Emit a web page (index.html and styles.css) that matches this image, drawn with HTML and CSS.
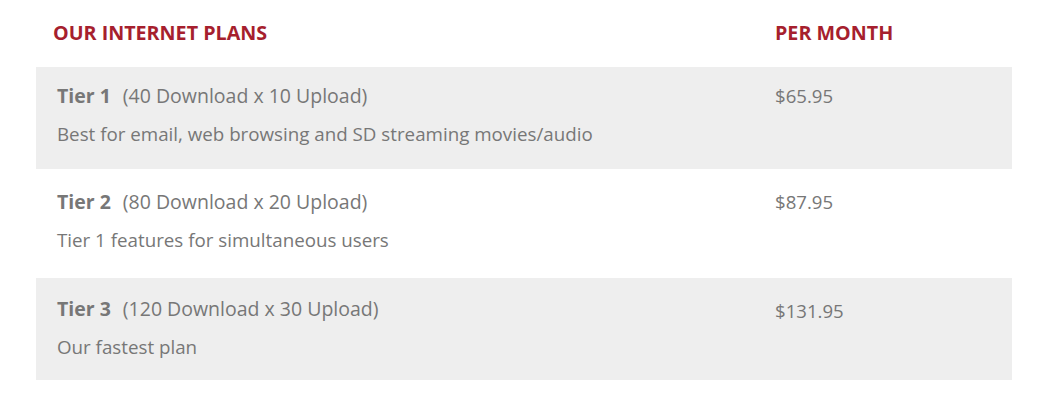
FILE: index.html
```html
<!DOCTYPE html>
<html>
<head>
<meta charset="utf-8">
<link rel="stylesheet" href="styles.css">
</head>
<body>
<div class="plans">
  <div class="head">
    <div class="col-plan">OUR INTERNET PLANS</div>
    <div class="col-price">PER MONTH</div>
  </div>
  <div class="row shade r1">
    <div class="col-plan">
      <div class="title"><b>Tier 1</b><span class="speed">(40 Download x 10 Upload)</span></div>
      <div class="desc">Best for email, web browsing and SD streaming movies/audio</div>
    </div>
    <div class="col-price price">$65.95</div>
  </div>
  <div class="row r2">
    <div class="col-plan">
      <div class="title"><b>Tier 2</b><span class="speed">(80 Download x 20 Upload)</span></div>
      <div class="desc">Tier 1 features for simultaneous users</div>
    </div>
    <div class="col-price price">$87.95</div>
  </div>
  <div class="row shade r3">
    <div class="col-plan">
      <div class="title"><b>Tier 3</b><span class="speed">(120 Download x 30 Upload)</span></div>
      <div class="desc">Our fastest plan</div>
    </div>
    <div class="col-price price price-low">$131.95</div>
  </div>
</div>
</body>
</html>
```
FILE: styles.css
```css
html, body {
  margin: 0;
  padding: 0;
  background: #ffffff;
}
body {
  font-family: "Open Sans", "Liberation Sans", sans-serif;
  color: #777777;
  font-size: 18px;
}
.plans {
  width: 976px;
  margin-left: 36px;
}
.head {
  display: grid;
  grid-template-columns: 722px 1fr;
  padding: 20px 0 0 17px;
  height: 67px;
  box-sizing: border-box;
  color: #a61f2e;
  font-weight: 700;
  font-size: 19.7px;
  line-height: 26px;
}
.row {
  display: grid;
  grid-template-columns: 718px 1fr;
  padding-left: 21px;
  box-sizing: border-box;
}
.r1 { height: 102px; padding-top: 16px; }
.r2 { height: 109px; padding-top: 20px; }
.r3 { height: 102px; padding-top: 18px; }
.shade { background: #eeeeee; }
.title {
  line-height: 26px;
  font-size: 19.5px;
}
.title b { font-weight: 700; }
.speed { margin-left: 12px; }
.desc {
  line-height: 26px;
  font-size: 18.75px;
  margin-top: 12px;
}
.price {
  line-height: 26px;
  font-size: 18.6px;
}
.price-low { padding-top: 2px; }
```
